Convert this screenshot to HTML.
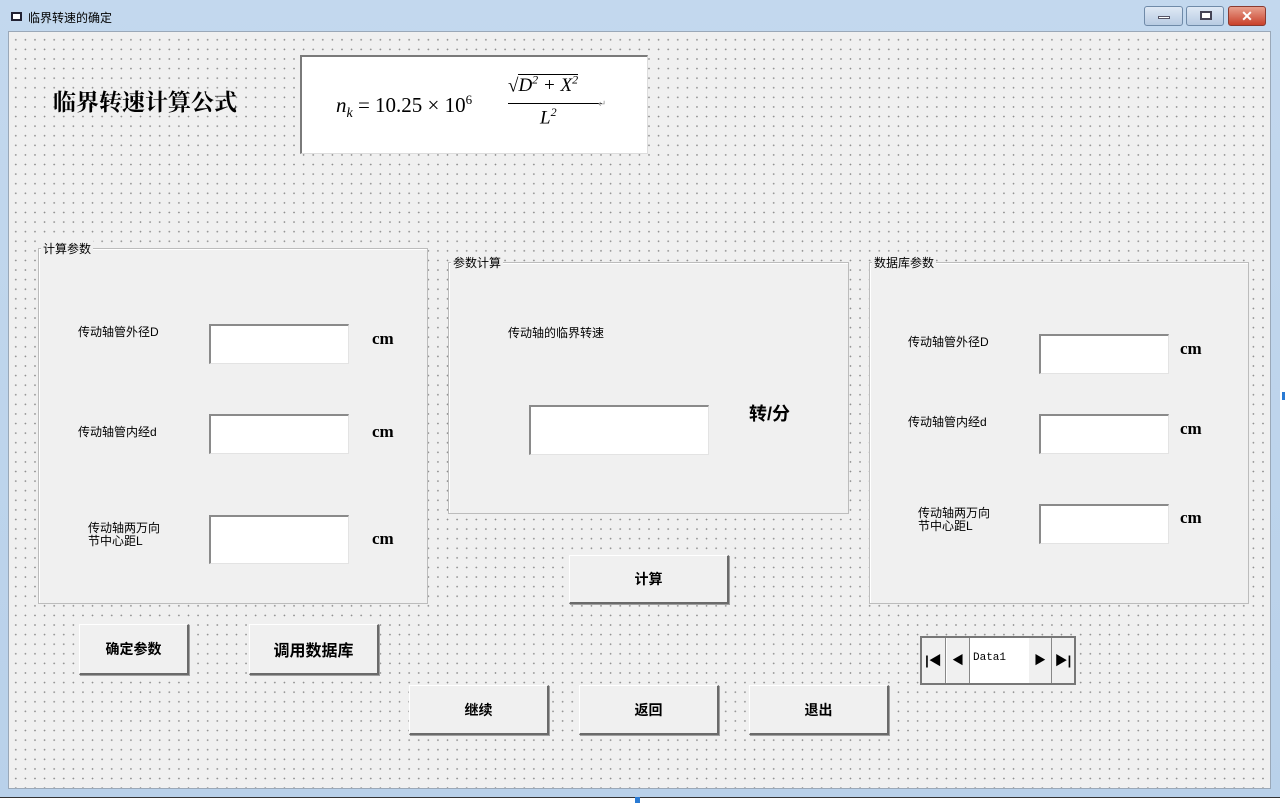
<!DOCTYPE html>
<html><head><meta charset="utf-8"><style>
*{margin:0;padding:0;box-sizing:border-box}
body{width:1285px;height:803px;background:#fff;position:relative;overflow:hidden;font-family:"Liberation Sans","Noto Sans CJK SC","WenQuanYi Zen Hei",sans-serif}
.win{position:absolute;left:0;top:0;width:1280px;height:798px;background:linear-gradient(#c3d8ee,#b9d1ea);border-bottom:1px solid #333}
.client{position:absolute;left:8px;top:31px;width:1263px;height:758px;background-color:#f0f0f0;background-image:radial-gradient(circle,#8a8a8a 0.7px,transparent 0.9px);background-size:9.6px 9.6px;background-position:2px 3px;border:1px solid #9aa8b8}
.a{position:absolute}
.frame{position:absolute;background:#f0f0f0;border:1px solid #bcbcbc;box-shadow:inset 1px 1px 0 #fff}
.frame span{position:absolute;top:-9px;left:2px;background:#f0f0f0;padding:0 2px;font-size:12px;color:#000}
.tb{position:absolute;background:#fff;border-top:2px solid #8a8a8a;border-left:2px solid #8a8a8a;border-right:1px solid #e3e3e3;border-bottom:1px solid #e3e3e3}
.btn{position:absolute;background:#f0f0f0;border:1px solid #fff;border-right:2px solid #6a6a6a;border-bottom:2px solid #6a6a6a;box-shadow:1px 1px 0 #a0a0a0;display:flex;align-items:center;justify-content:center;font-weight:bold;font-size:14px}
.lbl{position:absolute;font-size:12px;color:#000;line-height:13px}
.cm{position:absolute;font-family:"Liberation Serif",serif;font-weight:bold;font-size:17px}
.wb{position:absolute;top:6px;height:20px;border:1px solid #6f8aa8;border-radius:3px;background:linear-gradient(#dfe9f5,#b8cbe2)}
</style></head><body>
<div class="win">
<div class="a" style="left:11px;top:12px;width:11px;height:9px;border:2px solid #223;background:#fff"></div>
<div class="a" style="left:28px;top:9px;font-size:12px;color:#000">临界转速的确定</div>
<div class="wb" style="left:1144px;width:39px"><div class="a" style="left:13px;top:9px;width:12px;height:3px;background:#fff;border:1px solid #556"></div></div>
<div class="wb" style="left:1186px;width:38px"><div class="a" style="left:13px;top:4px;width:12px;height:9px;border:2px solid #445;background:#fff"></div></div>
<div class="wb" style="left:1228px;width:38px;background:linear-gradient(#e8a08e,#c9412b);border-color:#8a3a30;color:#fff;font-weight:bold;font-size:14px;text-align:center;line-height:18px">✕</div>
<div class="client">
</div>
</div>
<div class="a" style="left:1282px;top:392px;width:3px;height:8px;background:#2a7bd4"></div>
<div class="a" style="left:635px;top:797px;width:5px;height:6px;background:#2a7bd4"></div>

<div class="a" style="left:53px;top:84px;font-family:'Liberation Serif','Noto Serif CJK SC',serif;font-weight:bold;font-size:23px">临界转速计算公式</div>
<div class="a" style="left:300px;top:55px;width:348px;height:99px;background:#fff;border-top:2px solid #7a7a7a;border-left:2px solid #7a7a7a;border-right:1px solid #ddd;border-bottom:1px solid #ddd">
 <div class="a" style="left:34px;top:35px;font-family:'Liberation Serif',serif;font-size:21px;white-space:nowrap"><i>n<sub style="font-size:14px">k</sub></i> = 10.25 × 10<sup style="font-size:13px">6</sup></div>
 <div class="a" style="left:206px;top:16px;font-family:'Liberation Serif',serif;font-size:19px;font-style:italic;white-space:nowrap">√<span style="border-top:1px solid #000">D<sup style="font-size:12px">2</sup> + X<sup style="font-size:12px">2</sup></span></div>
 <div class="a" style="left:206px;top:46px;width:94px;height:1px;background:#000"></div>
 <div class="a" style="left:238px;top:48px;font-family:'Liberation Serif',serif;font-size:19px;font-style:italic">L<sup style="font-size:12px">2</sup></div>
 <div class="a" style="left:296px;top:42px;font-size:10px;color:#999">↵</div>
</div>

<div class="frame" style="left:38px;top:248px;width:390px;height:356px"><span>计算参数</span></div>
<div class="lbl" style="left:78px;top:326px">传动轴管外径D</div>
<div class="tb" style="left:209px;top:324px;width:140px;height:40px"></div>
<div class="cm" style="left:372px;top:329px">cm</div>
<div class="lbl" style="left:78px;top:426px">传动轴管内经d</div>
<div class="tb" style="left:209px;top:414px;width:140px;height:40px"></div>
<div class="cm" style="left:372px;top:422px">cm</div>
<div class="lbl" style="left:88px;top:522px">传动轴两万向<br>节中心距L</div>
<div class="tb" style="left:209px;top:515px;width:140px;height:49px"></div>
<div class="cm" style="left:372px;top:529px">cm</div>

<div class="frame" style="left:448px;top:262px;width:401px;height:252px"><span>参数计算</span></div>
<div class="lbl" style="left:508px;top:327px">传动轴的临界转速</div>
<div class="tb" style="left:529px;top:405px;width:180px;height:50px"></div>
<div class="a" style="left:749px;top:400px;font-weight:bold;font-size:18px">转/分</div>

<div class="frame" style="left:869px;top:262px;width:380px;height:342px"><span>数据库参数</span></div>
<div class="lbl" style="left:908px;top:336px">传动轴管外径D</div>
<div class="tb" style="left:1039px;top:334px;width:130px;height:40px"></div>
<div class="cm" style="left:1180px;top:339px">cm</div>
<div class="lbl" style="left:908px;top:416px">传动轴管内经d</div>
<div class="tb" style="left:1039px;top:414px;width:130px;height:40px"></div>
<div class="cm" style="left:1180px;top:419px">cm</div>
<div class="lbl" style="left:918px;top:507px">传动轴两万向<br>节中心距L</div>
<div class="tb" style="left:1039px;top:504px;width:130px;height:40px"></div>
<div class="cm" style="left:1180px;top:508px">cm</div>

<div class="btn" style="left:569px;top:555px;width:160px;height:49px">计算</div>
<div class="btn" style="left:79px;top:624px;width:110px;height:51px">确定参数</div>
<div class="btn" style="left:249px;top:624px;width:130px;height:51px;font-size:16px">调用数据库</div>
<div class="btn" style="left:409px;top:685px;width:140px;height:50px">继续</div>
<div class="btn" style="left:579px;top:685px;width:140px;height:50px">返回</div>
<div class="btn" style="left:749px;top:685px;width:140px;height:50px">退出</div>

<div class="a" style="left:920px;top:636px;width:156px;height:49px;border:2px solid #777;background:#fff">
 <div class="a" style="left:0;top:0;width:24px;height:45px;background:#f0f0f0;border-right:1px solid #888;font-size:13px;font-weight:bold;text-align:center;line-height:45px">|◀</div>
 <div class="a" style="left:25px;top:0;width:23px;height:45px;background:#f0f0f0;border-right:1px solid #888;font-size:12px;text-align:center;line-height:45px">◀</div>
 <div class="a" style="left:51px;top:14px;font-family:'Liberation Mono',monospace;font-size:11px">Data1</div>
 <div class="a" style="left:107px;top:0;width:23px;height:45px;background:#f0f0f0;border-right:1px solid #888;font-size:12px;text-align:center;line-height:45px">▶</div>
 <div class="a" style="left:130px;top:0;width:22px;height:45px;background:#f0f0f0;font-size:13px;font-weight:bold;text-align:center;line-height:45px">▶|</div>
</div>
</body></html>
